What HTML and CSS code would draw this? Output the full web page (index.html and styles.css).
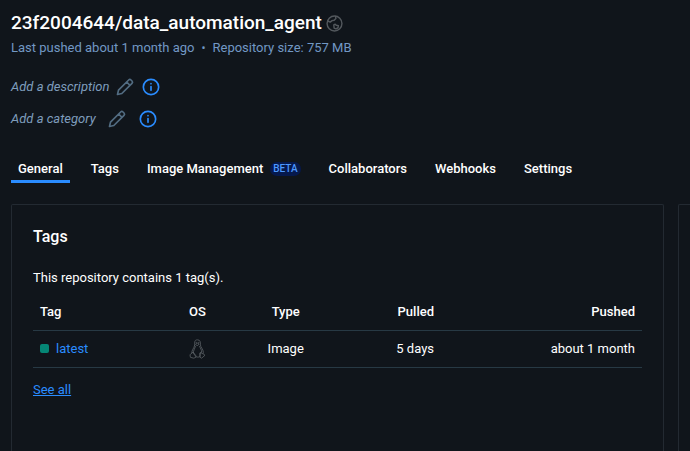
FILE: index.html
```html
<!DOCTYPE html>
<html lang="en">
<head>
<meta charset="utf-8">
<title>23f2004644/data_automation_agent</title>
<link rel="stylesheet" href="styles.css">
</head>
<body>
<svg class="sprite" aria-hidden="true">
  <symbol id="pencil" viewBox="0 0 24 24"><path d="M3 21l1.2-5.2L16.4 3.6a2 2 0 0 1 2.8 0l1.2 1.200a2 2 0 0 1 0 2.800L8.200 19.800 3 21zM14 6l4 4"/></symbol>
  <symbol id="info" viewBox="0 0 24 24"><circle cx="12" cy="12" r="9.2"/><path d="M12 11.500v4.500M12 8v.2"/></symbol>
</svg>
<header class="header">
  <div class="title-row">
    <h1 class="title">23f2004644/data_automation_agent</h1>
    <svg class="globe" viewBox="0 0 24 24" aria-hidden="true"><circle cx="12" cy="12" r="10.500"/><path d="M2.500 8.500L6 10l2.500-2 3-.5L14 5l-.5-3M11 14l2-1 1.500 1.500 3 .5-.5 3-3 1.500-2.500-1z"/></svg>
  </div>
  <p class="meta"><span>Last pushed about 1 month ago</span><span class="dot">•</span><span>Repository size: 757 MB</span></p>
  <div class="add-row">
    <span>Add a description</span>
    <button class="icon-button" aria-label="Edit description"><svg class="icon"><use href="#pencil"/></svg></button>
    <button class="icon-button info" aria-label="About descriptions"><svg class="icon"><use href="#info"/></svg></button>
  </div>
  <div class="add-row category">
    <span>Add a category</span>
    <button class="icon-button" aria-label="Edit category"><svg class="icon"><use href="#pencil"/></svg></button>
    <button class="icon-button info" aria-label="About categories"><svg class="icon"><use href="#info"/></svg></button>
  </div>
</header>
<nav class="tabs">
  <a class="tab active" href="#general">General</a>
  <a class="tab" href="#tags">Tags</a>
  <a class="tab" href="#images">Image Management<span class="beta">BETA</span></a>
  <a class="tab" href="#collaborators">Collaborators</a>
  <a class="tab" href="#webhooks">Webhooks</a>
  <a class="tab" href="#settings">Settings</a>
</nav>
<main class="content">
  <section class="card">
    <h2 class="card-title">Tags</h2>
    <p class="summary">This repository contains 1 tag(s).</p>
    <table class="table">
      <colgroup><col class="col-tag"><col class="col-os"><col class="col-type"><col class="col-pulled"><col></colgroup>
      <thead><tr><th>Tag</th><th class="center">OS</th><th class="center">Type</th><th class="right">Pulled</th><th class="right">Pushed</th></tr></thead>
      <tbody><tr>
        <td><a class="tag-link" href="#latest">latest</a></td>
        <td class="center"><svg class="linux" viewBox="0 0 20 24" role="img" aria-label="Linux"><path d="M6.500 8C6.500 3 6.500 1 10 1s3.500 3 3.500 6c0 3 3.500 5 3.500 9v1M6.500 8C6 11 3 13 3 17M7.500 9c-1 3-2.500 5-2.500 8l3 4c1.500 1 3.500 1 5 0V17l2-1c0-3-1.500-5-2.500-7M8 6l2-1 2 1-2 2zM8.500 4v.3M11.500 4v.3M3 17l-2 2 .5 3 4 1 2.500-1v-2l-3-4zM13 17v5l2 1 4-3.500-2-1.500-2-1z"/></svg></td>
        <td class="center">Image</td><td class="right">5 days</td><td class="right">about 1 month</td>
      </tr></tbody>
    </table>
    <a class="see-all" href="#tags">See all</a>
  </section>
  <aside class="card side"></aside>
</main>
</body>
</html>
```
FILE: styles.css
```css
* { box-sizing: border-box; }
body {
  display: flex;
  flex-direction: column;
  min-height: 100vh;
  margin: 0;
  padding: 12px 0 0 11px;
  background: #10151b;
  color: #fff;
  font: 13px/20px Roboto, "Liberation Sans", sans-serif;
}
h1, h2, p { margin: 0; }
svg { fill: none; stroke: currentColor; stroke-linejoin: round; stroke-linecap: round; }
.sprite { position: absolute; width: 0; height: 0; }
.title-row { display: flex; align-items: center; gap: 4px; }
.title { font-size: 19px; line-height: 22px; font-weight: 500; }
.globe { width: 17px; height: 17px; color: #53585d; stroke-width: 2; }
.meta { display: flex; gap: 7px; margin-top: 4px; color: #7298c4; }
.dot { font-size: 12px; }
.add-row {
  display: flex;
  align-items: center;
  gap: 6px;
  margin-top: 12px;
  color: #7f9dbd;
  font-style: italic;
}
.meta + .add-row { margin-top: 19px; }
.category { gap: 11px; }
.icon-button { display: flex; padding: 0; border: 0; background: none; color: #526c82; }
.icon { width: 20px; height: 20px; stroke-width: 2; }
.info { color: #2a8cff; }
.tabs { display: flex; gap: 14px; margin-top: 25px; }
.tab {
  display: flex;
  align-items: center;
  height: 29px;
  padding: 3px 7px 0;
  border-bottom: 3px solid transparent;
  color: #fff;
  font-weight: 500;
  text-decoration: none;
}
.active { border-color: #2a8cff; }
.beta {
  margin-left: 7px;
  padding: 0 3px;
  border-radius: 7px;
  background: #06194d;
  color: #4d99ff;
  font-size: 10px;
  line-height: 14px;
}
.content {
  display: grid;
  flex: 1;
  grid-template-columns: minmax(0, 1fr) 12px;
  gap: 14px;
  margin-top: 21px;
}
.card {
  padding: 22px 21px;
  border: 1px solid #232a32;
  border-bottom: 0;
  border-radius: 2px 2px 0 0;
}
.side { padding: 0; border-right: 0; border-radius: 2px 0 0 0; }
.card-title { font-size: 16px; line-height: 20px; font-weight: 500; }
.summary { margin-top: 21px; }
.table { width: 100%; margin-top: 5px; border-collapse: collapse; table-layout: fixed; }
.col-tag { width: 22%; }
.col-os { width: 10%; }
.col-type { width: 19%; }
.col-pulled { width: 16%; }
th, td { height: 37px; padding: 0 7px; border-bottom: 1px solid #273944; text-align: left; }
th { padding-top: 2px; font-weight: 500; }
.center { text-align: center; }
.right { text-align: right; }
.tag-link { display: flex; align-items: center; gap: 7px; color: #2a8cff; text-decoration: none; }
.tag-link::before { width: 9px; height: 9px; border-radius: 2px; background: #058675; content: ""; }
.linux { display: inline-block; width: 17px; height: 20px; color: #595f64; vertical-align: middle; stroke-width: 1; }
.see-all { display: inline-block; margin-top: 12px; color: #2a8cff; }
```
